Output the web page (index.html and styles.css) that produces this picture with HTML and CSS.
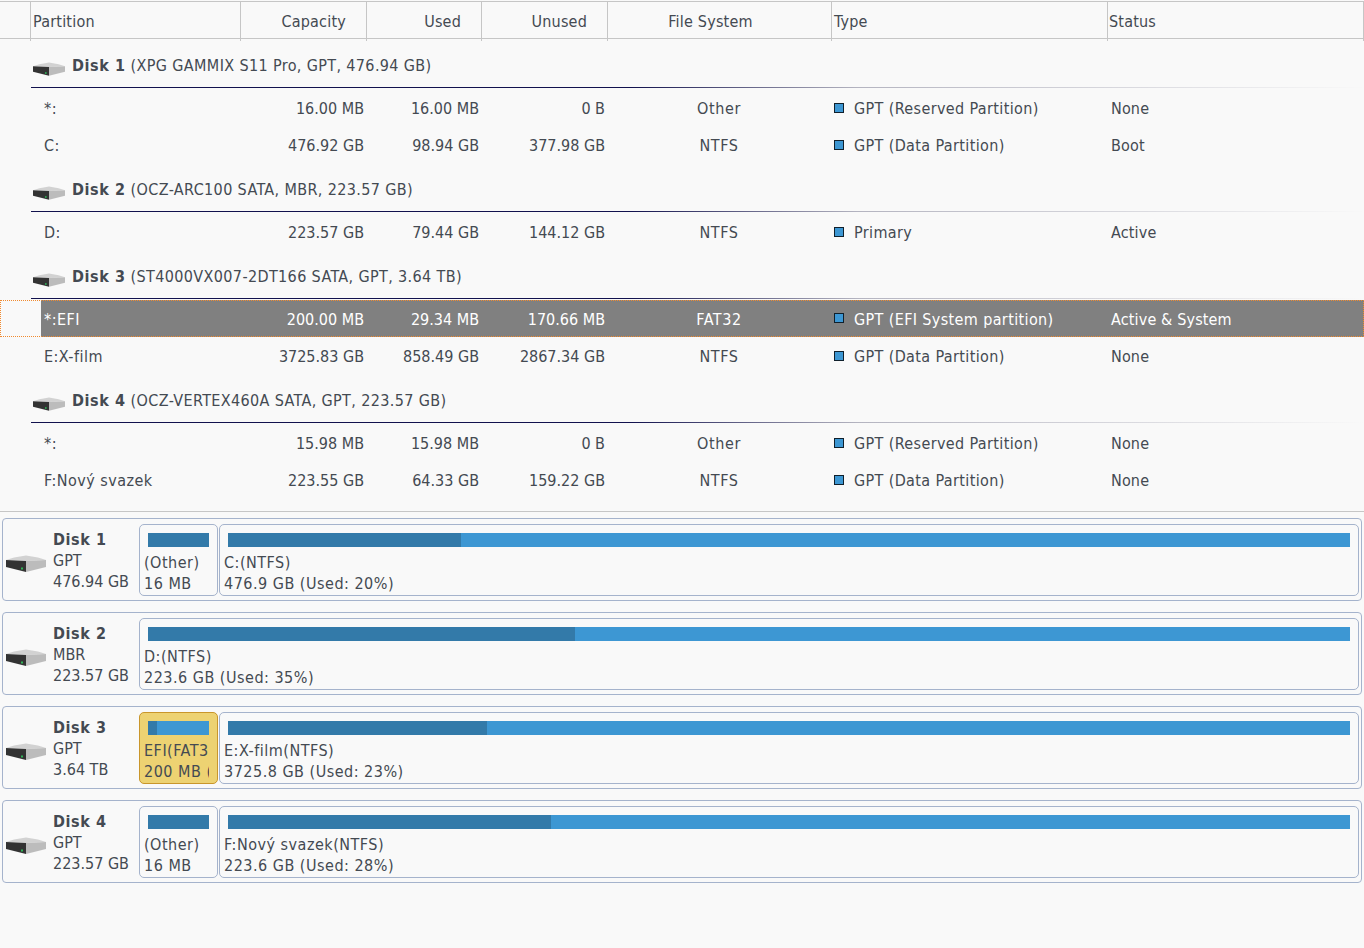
FILE: index.html
```html
<!DOCTYPE html>
<html lang="en">
<head>
<meta charset="utf-8">
<title>Partitions</title>
<link rel="stylesheet" href="styles.css">
</head>
<body>
<svg class="defs" width="0" height="0" aria-hidden="true">
  <symbol id="disk" viewBox="0 0 40 17">
    <polygon points="0,5 8,2.5 20,0.5 32,2.5 40,5 20,6" fill="#d2d2d2"/>
    <polygon points="0,5 20,6 20,17 0,12" fill="#333333"/>
    <polygon points="20,6 40,5 40,12 20,17" fill="#bcbcbc"/>
    <rect x="15" y="12.5" width="2" height="2" fill="#2fb457"/>
  </symbol>
</svg>
<div class="header">
  <div class="hcell gutter"></div>
  <div class="hcell">Partition</div>
  <div class="hcell right">Capacity</div>
  <div class="hcell right">Used</div>
  <div class="hcell right">Unused</div>
  <div class="hcell center">File System</div>
  <div class="hcell">Type</div>
  <div class="hcell">Status</div>
</div>

<div class="group"><svg class="gicon"><use href="#disk"/></svg><span class="gtext"><b>Disk 1</b> (XPG GAMMIX S11 Pro, GPT, 476.94 GB)</span></div>
<div class="row"><div class="cell"></div><div class="cell name">*:</div><div class="cell num">16.00 MB</div><div class="cell num">16.00 MB</div><div class="cell num">0 B</div><div class="cell fs">Other</div><div class="cell type"><i class="sq"></i><span>GPT (Reserved Partition)</span></div><div class="cell status">None</div></div>
<div class="row"><div class="cell"></div><div class="cell name">C:</div><div class="cell num">476.92 GB</div><div class="cell num">98.94 GB</div><div class="cell num">377.98 GB</div><div class="cell fs">NTFS</div><div class="cell type"><i class="sq"></i><span>GPT (Data Partition)</span></div><div class="cell status">Boot</div></div>

<div class="group"><svg class="gicon"><use href="#disk"/></svg><span class="gtext"><b>Disk 2</b> (OCZ-ARC100 SATA, MBR, 223.57 GB)</span></div>
<div class="row"><div class="cell"></div><div class="cell name">D:</div><div class="cell num">223.57 GB</div><div class="cell num">79.44 GB</div><div class="cell num">144.12 GB</div><div class="cell fs">NTFS</div><div class="cell type"><i class="sq"></i><span>Primary</span></div><div class="cell status">Active</div></div>

<div class="group"><svg class="gicon"><use href="#disk"/></svg><span class="gtext"><b>Disk 3</b> (ST4000VX007-2DT166 SATA, GPT, 3.64 TB)</span></div>
<div class="row selected"><div class="cell"></div><div class="cell name">*:EFI</div><div class="cell num">200.00 MB</div><div class="cell num">29.34 MB</div><div class="cell num">170.66 MB</div><div class="cell fs">FAT32</div><div class="cell type"><i class="sq"></i><span>GPT (EFI System partition)</span></div><div class="cell status">Active &amp; System</div></div>
<div class="row"><div class="cell"></div><div class="cell name">E:X-film</div><div class="cell num">3725.83 GB</div><div class="cell num">858.49 GB</div><div class="cell num">2867.34 GB</div><div class="cell fs">NTFS</div><div class="cell type"><i class="sq"></i><span>GPT (Data Partition)</span></div><div class="cell status">None</div></div>

<div class="group"><svg class="gicon"><use href="#disk"/></svg><span class="gtext"><b>Disk 4</b> (OCZ-VERTEX460A SATA, GPT, 223.57 GB)</span></div>
<div class="row"><div class="cell"></div><div class="cell name">*:</div><div class="cell num">15.98 MB</div><div class="cell num">15.98 MB</div><div class="cell num">0 B</div><div class="cell fs">Other</div><div class="cell type"><i class="sq"></i><span>GPT (Reserved Partition)</span></div><div class="cell status">None</div></div>
<div class="row"><div class="cell"></div><div class="cell name">F:Nový svazek</div><div class="cell num">223.55 GB</div><div class="cell num">64.33 GB</div><div class="cell num">159.22 GB</div><div class="cell fs">NTFS</div><div class="cell type"><i class="sq"></i><span>GPT (Data Partition)</span></div><div class="cell status">None</div></div>

<div class="maps">
  <div class="card">
    <div class="info"><svg class="cicon"><use href="#disk"/></svg><div class="meta"><b>Disk 1</b><span>GPT</span><span>476.94 GB</span></div></div>
    <div class="part small"><div class="bar"><div class="used" style="width:100%"></div></div><div class="ptext">(Other)</div><div class="ptext">16 MB</div></div>
    <div class="part wide"><div class="bar"><div class="used" style="width:20.8%"></div></div><div class="ptext">C:(NTFS)</div><div class="ptext">476.9 GB (Used: 20%)</div></div>
  </div>
  <div class="card">
    <div class="info"><svg class="cicon"><use href="#disk"/></svg><div class="meta"><b>Disk 2</b><span>MBR</span><span>223.57 GB</span></div></div>
    <div class="part wide"><div class="bar"><div class="used" style="width:35.5%"></div></div><div class="ptext">D:(NTFS)</div><div class="ptext">223.6 GB (Used: 35%)</div></div>
  </div>
  <div class="card">
    <div class="info"><svg class="cicon"><use href="#disk"/></svg><div class="meta"><b>Disk 3</b><span>GPT</span><span>3.64 TB</span></div></div>
    <div class="part small active"><div class="bar"><div class="used" style="width:14.7%"></div></div><div class="ptext">EFI(FAT32)</div><div class="ptext">200 MB (Used: 15%)</div></div>
    <div class="part wide"><div class="bar"><div class="used" style="width:23.1%"></div></div><div class="ptext">E:X-film(NTFS)</div><div class="ptext">3725.8 GB (Used: 23%)</div></div>
  </div>
  <div class="card">
    <div class="info"><svg class="cicon"><use href="#disk"/></svg><div class="meta"><b>Disk 4</b><span>GPT</span><span>223.57 GB</span></div></div>
    <div class="part small"><div class="bar"><div class="used" style="width:100%"></div></div><div class="ptext">(Other)</div><div class="ptext">16 MB</div></div>
    <div class="part wide"><div class="bar"><div class="used" style="width:28.8%"></div></div><div class="ptext">F:Nový svazek(NTFS)</div><div class="ptext">223.6 GB (Used: 28%)</div></div>
  </div>
</div>
</body>
</html>
```
FILE: styles.css
```css
* { box-sizing: border-box; }
html, body { margin: 0; height: 100%; }
body {
  background: #f9f9f9;
  color: #444a52;
  font-family: "DejaVu Sans", Verdana, sans-serif;
  font-stretch: condensed;
  font-size: 16px;
  overflow: hidden;
}
b { font-weight: 700; letter-spacing: .6px; }
.defs { position: absolute; }

.header {
  display: grid;
  grid-template-columns: 31px 210px 126px 115px 126px 224px 276px 256px;
  width: 1364px;
  height: 38px;
  margin-top: 1px;
  border-top: 1px solid #c6c6c6;
  border-bottom: 1px solid #c6c6c6;
}
.hcell {
  border-right: 1px solid #c6c6c6;
  line-height: 39px;
  padding-left: 2px;
  letter-spacing: .2px;
  white-space: nowrap;
}
.hcell.right { text-align: right; padding-right: 20px; padding-left: 0; }
.hcell.center { text-align: center; padding-right: 18px; padding-left: 0; }
.hcell:nth-child(8) { padding-left: 1px; }

.group {
  height: 49px;
  margin-left: 31px;
  display: flex;
  align-items: flex-end;
  gap: 7px;
  padding: 0 0 11px 2px;
  line-height: 20px;
  border-bottom: 1px solid;
  border-image: linear-gradient(90deg, #12124e 0, #12124e 45%, #b4b4c0 62%, #f9f9f9 100%) 1;
}
.row + .group { height: 50px; }
.gicon { width: 32px; height: 14px; flex: none; }
.gtext { letter-spacing: .37px; white-space: nowrap; }

.row {
  display: grid;
  grid-template-columns: 41px 199px 126px 115px 126px 224px 276px 1fr;
  height: 37px;
  line-height: 42px;
  white-space: nowrap;
}
.row.selected {
  height: 37px;
  margin-top: 1px;
  margin-bottom: -1px;
  line-height: 40px;
  color: #fff;
  outline: 1px dotted #f08a30;
  outline-offset: -1px;
}
.row.selected .cell:not(:first-child) { background: #808080; }
.cell { overflow: hidden; }
.name { padding-left: 3px; letter-spacing: .45px; }
.num { text-align: right; padding-right: 2px; }
.fs { text-align: center; letter-spacing: .6px; }
.type { display: flex; align-items: flex-start; gap: 10px; padding-left: 3px; letter-spacing: .37px; }
.status { padding-left: 4px; letter-spacing: .15px; }
.sq {
  width: 10px;
  height: 10px;
  background: #3d97d3;
  border: 1px solid #10202c;
  flex: none;
  margin-top: 15px;
}
.selected .sq { margin-top: 13px; }

.maps {
  margin-top: 14px;
  border-top: 1px solid #c6c6c6;
  padding: 6px 2px 0 2px;
  display: flex;
  flex-direction: column;
  gap: 11px;
  width: 1364px;
}
.card {
  height: 83px;
  width: 1360px;
  border: 1px solid #a5b3cc;
  border-radius: 4px;
  padding: 5px 2px 4px 0;
  display: flex;
}
.info {
  width: 136px;
  flex: none;
  display: flex;
  align-items: center;
}
.cicon { width: 40px; height: 17px; margin: 7px 7px 0 3px; flex: none; }
.meta { display: flex; flex-direction: column; line-height: 21px; white-space: nowrap; }
.part {
  border: 1px solid #a5b3cc;
  border-radius: 5px;
  padding: 8px 8px 0 4px;
  overflow: hidden;
  line-height: 21px;
  white-space: nowrap;
  letter-spacing: .5px;
}
.part.small { width: 79px; flex: none; }
.part.wide { flex: 1; min-width: 0; }
.small + .wide { margin-left: 1px; }
.part.active { background: #edd272; border-color: #c9962b; }
.bar {
  height: 14px;
  background: #3d97d3;
  margin: 0 0 5px 4px;
}
.used { height: 100%; background: #337aa9; }
.ptext { overflow: hidden; }
```
